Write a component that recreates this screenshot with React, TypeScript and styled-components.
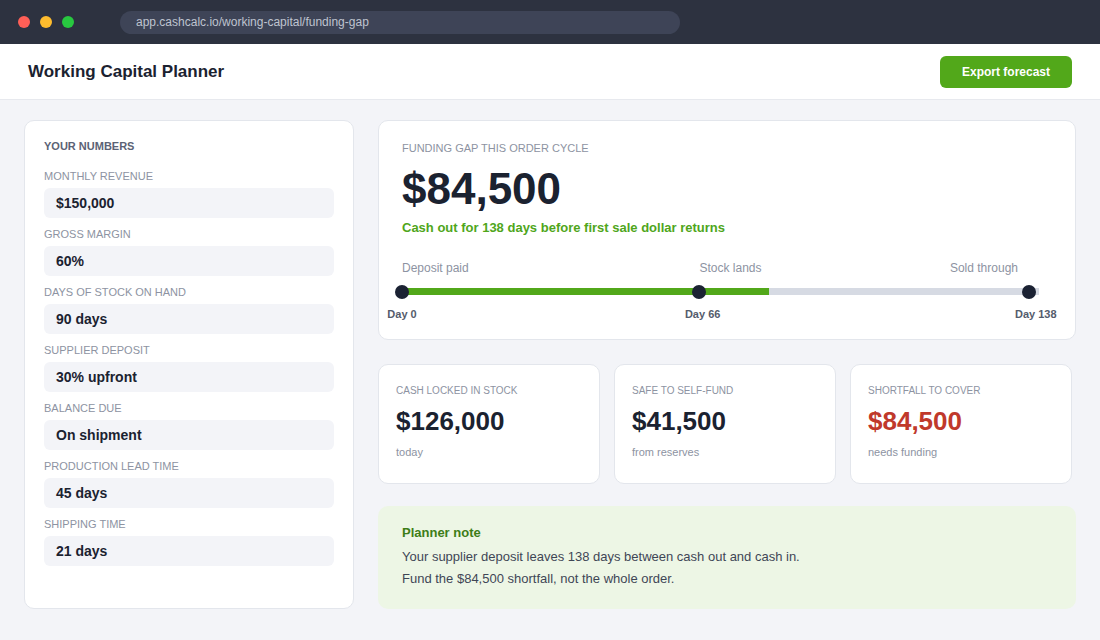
import * as React from "react";
import styled, { createGlobalStyle } from "styled-components";

const ink = "#1b2230";
const muted = "#8d93a2";
const green = "#52a81a";
const line = "#e3e6ec";

const GlobalStyle = createGlobalStyle`
  * { box-sizing: border-box; }
  html, body { margin: 0; padding: 0; }
  body {
    background: #f3f4f8;
    font-family: "Liberation Sans", Arial, sans-serif;
    color: ${ink};
  }
`;

const Page = styled.div`
  width: 1100px;
  height: 640px;
  display: flex;
  flex-direction: column;
  background: #f3f4f8;
  overflow: hidden;
`;

const Chrome = styled.div`
  flex-shrink: 0;
  height: 44px;
  background: #2d3240;
  display: flex;
  align-items: center;
  padding: 0 18px;
  gap: 10px;
`;

const Light = styled.span<{ $color: string }>`
  width: 12px;
  height: 12px;
  border-radius: 50%;
  background: ${(p) => p.$color};
`;

const UrlBar = styled.div`
  margin-left: 36px;
  width: 560px;
  height: 23px;
  border-radius: 12px;
  background: #3e4457;
  color: #bfc3cf;
  font-size: 12px;
  display: flex;
  align-items: center;
  padding-left: 16px;
`;

const Header = styled.header`
  flex-shrink: 0;
  height: 56px;
  background: #fff;
  border-bottom: 1px solid #e7e9ee;
  display: flex;
  align-items: center;
  justify-content: space-between;
  padding: 1px 28px 0;
`;

const Title = styled.h1`
  margin: 0;
  font-size: 17px;
  font-weight: 700;
  color: ${ink};
`;

const ExportButton = styled.button`
  height: 32px;
  padding: 0 22px;
  border: none;
  border-radius: 6px;
  background: ${green};
  color: #fff;
  font-family: inherit;
  font-size: 12px;
  font-weight: 700;
`;

const Body = styled.main`
  display: grid;
  grid-template-columns: 330px 1fr;
  gap: 24px;
  padding: 20px 24px 31px;
  flex: 1;
  min-height: 0;
`;

const Card = styled.section`
  background: #fff;
  border: 1px solid ${line};
  border-radius: 10px;
`;

const InputsCard = styled(Card)`
  padding: 19px 19px;
  display: flex;
  flex-direction: column;
`;

const SectionHead = styled.div`
  font-size: 11px;
  font-weight: 700;
  color: #5b6275;
  margin-bottom: 18px;
`;

const Field = styled.div`
  display: flex;
  flex-direction: column;
  gap: 5px;
  margin-bottom: 10px;
`;

const FieldLabel = styled.div`
  font-size: 11px;
  color: ${muted};
  text-transform: uppercase;
  line-height: 13px;
`;

const FieldValue = styled.div`
  height: 30px;
  border-radius: 6px;
  background: #f3f4f8;
  display: flex;
  align-items: center;
  padding-left: 12px;
  font-size: 14px;
  font-weight: 700;
  color: ${ink};
`;

const RightCol = styled.div`
  display: flex;
  flex-direction: column;
  gap: 22px;
`;

const GapCard = styled(Card)`
  flex-shrink: 0;
  height: 220px;
  margin-bottom: 2px;
  padding: 21px 23px 0;
`;

const SmallCaps = styled.div<{ $size?: number }>`
  font-size: ${(p) => p.$size ?? 11}px;
  color: ${muted};
  text-transform: uppercase;
`;

const BigNumber = styled.div`
  font-size: 44px;
  font-weight: 700;
  color: ${ink};
  margin-top: 11px;
  line-height: 48px;
`;

const GreenLine = styled.div`
  margin-top: 7px;
  font-size: 13px;
  font-weight: 700;
  color: #4fa61b;
`;

const Timeline = styled.div`
  position: relative;
  margin-top: 26px;
  height: 58px;
  margin-right: 13px;
`;

const Stage = styled.span<{ $left?: string; $right?: string }>`
  position: absolute;
  top: 0;
  font-size: 12px;
  color: ${muted};
  left: ${(p) => p.$left ?? "auto"};
  right: ${(p) => p.$right ?? "auto"};
`;

const Track = styled.div`
  position: absolute;
  top: 27px;
  left: 0;
  right: 0;
  height: 7px;
  background: #d6dae3;
`;

const Fill = styled.div`
  height: 100%;
  background: ${green};
`;

const Dot = styled.span`
  position: absolute;
  top: 24px;
  width: 14px;
  height: 14px;
  margin-left: -7px;
  border-radius: 50%;
  background: #1b2233;
`;

const DayLabel = styled.span`
  position: absolute;
  top: 47px;
  font-size: 11px;
  font-weight: 700;
  color: #555c6c;
  transform: translateX(-50%);
  white-space: nowrap;
`;

const StatRow = styled.div`
  flex-shrink: 0;
  display: grid;
  grid-template-columns: repeat(3, 222px);
  gap: 14px;
`;

const StatCard = styled(Card)`
  height: 120px;
  padding: 20px 17px;
`;

const StatValue = styled.div<{ $danger?: boolean }>`
  font-size: 26px;
  font-weight: 700;
  color: ${(p) => (p.$danger ? "#c0392b" : ink)};
  margin-top: 10px;
  line-height: 30px;
`;

const StatNote = styled.div`
  margin-top: 10px;
  font-size: 11px;
  color: ${muted};
`;

const Note = styled.div`
  flex: 1;
  background: #edf6e5;
  border-radius: 10px;
  padding: 19px 24px;
`;

const NoteTitle = styled.div`
  font-size: 13px;
  font-weight: 700;
  color: #3d7d17;
  margin-bottom: 6px;
`;

const NoteText = styled.p`
  margin: 0;
  font-size: 13px;
  line-height: 22px;
  color: #3f4656;
`;

const fields = [
  ["Monthly revenue", "$150,000"],
  ["Gross margin", "60%"],
  ["Days of stock on hand", "90 days"],
  ["Supplier deposit", "30% upfront"],
  ["Balance due", "On shipment"],
  ["Production lead time", "45 days"],
  ["Shipping time", "21 days"],
];

const stats = [
  { label: "Cash locked in stock", value: "$126,000", note: "today" },
  { label: "Safe to self-fund", value: "$41,500", note: "from reserves" },
  { label: "Shortfall to cover", value: "$84,500", note: "needs funding", danger: true },
];

export default function App() {
  return (
    <Page>
      <GlobalStyle />
      <Chrome>
        <Light $color="#ff5f57" />
        <Light $color="#febc2e" />
        <Light $color="#28c840" />
        <UrlBar>app.cashcalc.io/working-capital/funding-gap</UrlBar>
      </Chrome>
      <Header>
        <Title>Working Capital Planner</Title>
        <ExportButton>Export forecast</ExportButton>
      </Header>
      <Body>
        <InputsCard>
          <SectionHead>YOUR NUMBERS</SectionHead>
          {fields.map(([label, value]) => (
            <Field key={label}>
              <FieldLabel>{label}</FieldLabel>
              <FieldValue>{value}</FieldValue>
            </Field>
          ))}
        </InputsCard>
        <RightCol>
          <GapCard>
            <SmallCaps>Funding gap this order cycle</SmallCaps>
            <BigNumber>$84,500</BigNumber>
            <GreenLine>Cash out for 138 days before first sale dollar returns</GreenLine>
            <Timeline>
              <Stage $left="0">Deposit paid</Stage>
              <Stage $left="46.7%">Stock lands</Stage>
              <Stage $right="21px">Sold through</Stage>
              <Track>
                <Fill style={{ width: `${(368 / 638) * 100}%` }} />
              </Track>
              <Dot style={{ left: "0%" }} />
              <Dot style={{ left: "46.7%" }} />
              <Dot style={{ left: "98.4%" }} />
              <DayLabel style={{ left: "0%" }}>Day 0</DayLabel>
              <DayLabel style={{ left: "47.2%" }}>Day 66</DayLabel>
              <DayLabel style={{ left: "99.5%" }}>Day 138</DayLabel>
            </Timeline>
          </GapCard>
          <StatRow>
            {stats.map((s) => (
              <StatCard key={s.label}>
                <SmallCaps $size={10}>{s.label}</SmallCaps>
                <StatValue $danger={s.danger}>{s.value}</StatValue>
                <StatNote>{s.note}</StatNote>
              </StatCard>
            ))}
          </StatRow>
          <Note>
            <NoteTitle>Planner note</NoteTitle>
            <NoteText>Your supplier deposit leaves 138 days between cash out and cash in.</NoteText>
            <NoteText>Fund the $84,500 shortfall, not the whole order.</NoteText>
          </Note>
        </RightCol>
      </Body>
    </Page>
  );
}
